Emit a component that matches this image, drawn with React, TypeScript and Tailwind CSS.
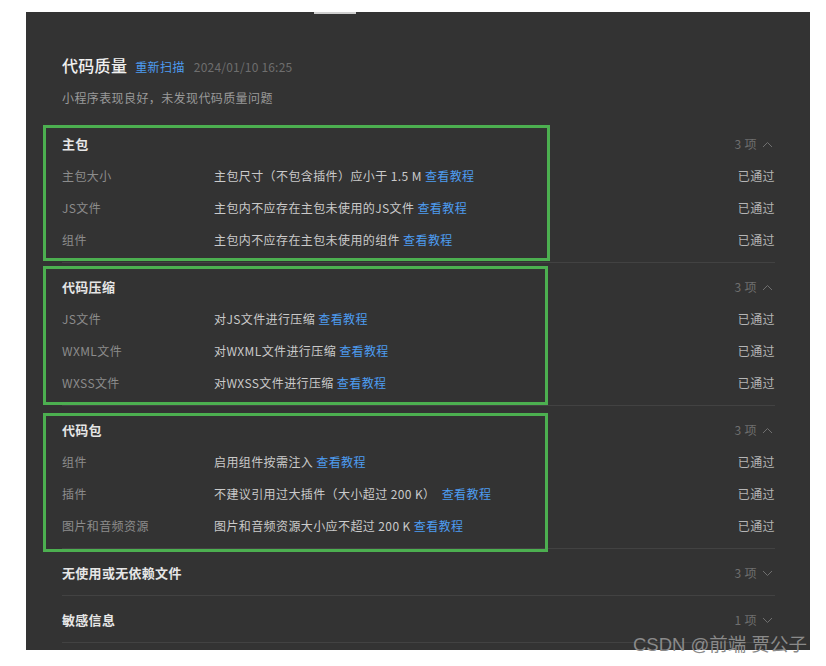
import React from "react";

type Row = { label: string; desc: string };
type Section = { title: string; count: number; open: boolean; rows: Row[] };

const sections: Section[] = [
  {
    title: "主包",
    count: 3,
    open: true,
    rows: [
      { label: "主包大小", desc: "主包尺寸（不包含插件）应小于 1.5 M" },
      { label: "JS文件", desc: "主包内不应存在主包未使用的JS文件" },
      { label: "组件", desc: "主包内不应存在主包未使用的组件" },
    ],
  },
  {
    title: "代码压缩",
    count: 3,
    open: true,
    rows: [
      { label: "JS文件", desc: "对JS文件进行压缩" },
      { label: "WXML文件", desc: "对WXML文件进行压缩" },
      { label: "WXSS文件", desc: "对WXSS文件进行压缩" },
    ],
  },
  {
    title: "代码包",
    count: 3,
    open: true,
    rows: [
      { label: "组件", desc: "启用组件按需注入" },
      { label: "插件", desc: "不建议引用过大插件（大小超过 200 K）\u00a0" },
      { label: "图片和音频资源", desc: "图片和音频资源大小应不超过 200 K" },
    ],
  },
  { title: "无使用或无依赖文件", count: 3, open: false, rows: [] },
  { title: "敏感信息", count: 1, open: false, rows: [] },
];

function Chevron({ up }: { up: boolean }) {
  return (
    <svg width="11" height="7" viewBox="0 0 11 7" className="ml-[5px]">
      <path
        d={up ? "M1 6 L5.5 1.5 L10 6" : "M1 1 L5.5 5.5 L10 1"}
        fill="none"
        stroke="#6f6f6f"
        strokeWidth="1"
      />
    </svg>
  );
}

export default function App() {
  return (
    <div
      className="relative w-[826px] h-[666px] bg-white overflow-hidden"
      style={{ fontFamily: '"Noto Sans CJK SC", "Noto Sans", sans-serif' }}
    >
      <div className="relative ml-[26px] mt-[12px] w-[784px] h-[638px] bg-[#333333] pl-[36px] pr-[35px] pt-[41px]">
        <div className="absolute left-[288px] top-0 w-[42px] h-[2px] bg-[#cfcfcf]" />
        <div className="flex items-baseline h-[24px] leading-[24px]">
          <span className="text-[16px] font-medium text-[#f0f0f0] tracking-[0.3px]">代码质量</span>
          <span className="ml-[8px] text-[12px] text-[#4d9cf0] tracking-[0.4px]">重新扫描</span>
          <span className="ml-[9px] text-[12px] text-[#6e6e6e] tracking-[0.2px]">2024/01/10 16:25</span>
        </div>
        <div className="mt-[11px] h-[20px] leading-[20px] text-[12px] text-[#9a9a9a] tracking-[0.4px]">
          小程序表现良好，未发现代码质量问题
        </div>
        <div className="mt-[12px]">
          {sections.map((s) => (
            <div key={s.title} className="pt-2 pb-[6px] border-b border-[#424242]">
              <div className="flex items-center justify-between h-8">
                <span className="text-[13px] font-bold text-[#e6e6e6] tracking-[0.3px]">{s.title}</span>
                <span className="flex items-center text-[12px] text-[#6f6f6f] pr-[2px] tracking-[0.4px]">
                  {s.count} 项
                  <Chevron up={s.open} />
                </span>
              </div>
              {s.rows.map((r) => (
                <div key={r.label} className="flex items-center h-8 text-[12px] tracking-[0.4px]">
                  <span className="w-[152px] text-[#8c8c8c]">{r.label}</span>
                  <span className="flex-1 text-[#cacaca]">
                    {r.desc} <span className="text-[#4d9cf0]">查看教程</span>
                  </span>
                  <span className="text-[#b5b5b5]">已通过</span>
                </div>
              ))}
            </div>
          ))}
        </div>
      </div>

      <div className="absolute left-[43px] top-[125px] w-[507px] h-[136px] border-[3px] border-[#4caf50]" />
      <div className="absolute left-[43px] top-[266px] w-[505px] h-[139px] border-[3px] border-[#4caf50]" />
      <div className="absolute left-[43px] top-[413px] w-[505px] h-[139px] border-[3px] border-[#4caf50]" />

      <div
        className="absolute left-[633px] top-[632px] text-[18.5px] leading-[26px] text-[#8a8a8a]"
        style={{ fontFamily: '"Liberation Sans", "Noto Sans CJK SC", sans-serif' }}
      >
        CSDN @前端 贾公子
      </div>
    </div>
  );
}
